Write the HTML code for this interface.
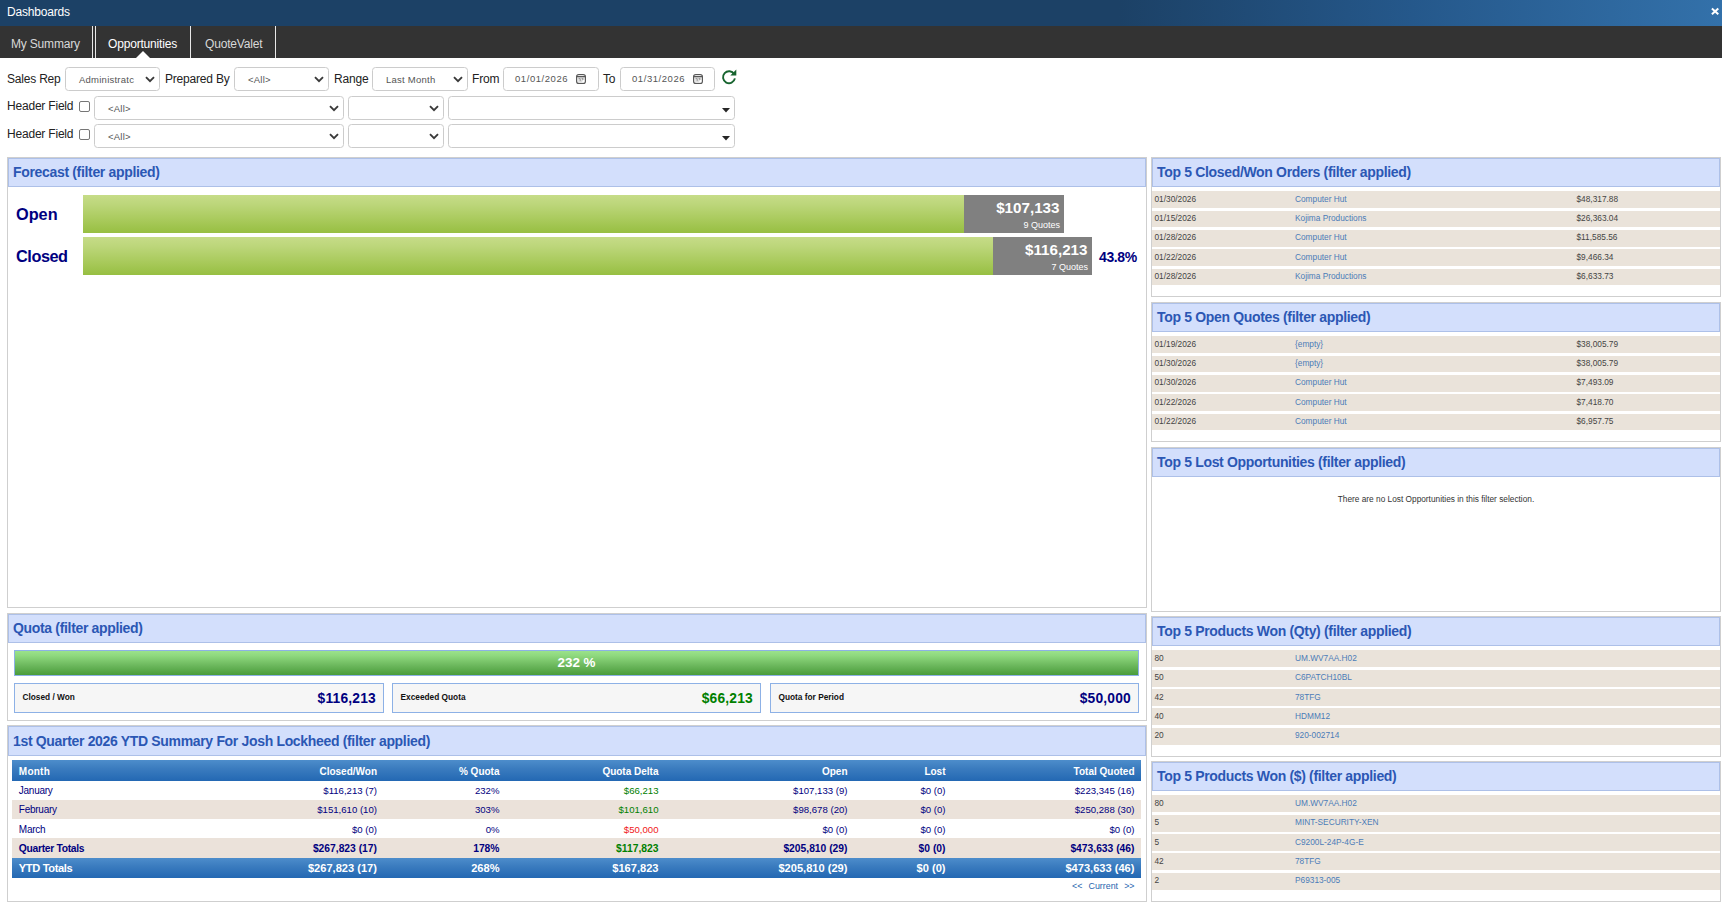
<!DOCTYPE html>
<html>
<head>
<meta charset="utf-8">
<title>Dashboards</title>
<style>
*{box-sizing:border-box;margin:0;padding:0}
html,body{width:1722px;height:909px;overflow:hidden;background:#fff}
body{position:relative;font-family:"Liberation Sans",Arial,sans-serif;font-size:12px;color:#222}
.abs{position:absolute}
/* title bar */
#title{position:absolute;left:0;top:0;width:1722px;height:26px;background:linear-gradient(90deg,#1c4166 0,#1c4166 65%,#25588b 82%,#3371aa 100%);color:#fff}
#title .t{position:absolute;left:7px;top:5px;font-size:12px;line-height:14px;letter-spacing:-0.2px}
#title .x{position:absolute;left:1710px;top:7px;width:10px;height:9px}
/* tab bar */
#tabs{position:absolute;left:0;top:26px;width:1722px;height:32px;background:#333}
#tabs .tab{position:absolute;top:0;height:32px;line-height:37px;letter-spacing:-0.18px;font-size:12px;color:#d8d8d8;white-space:nowrap}
#tabs .sep{position:absolute;top:0;width:1px;height:32px;background:#e8e8e8}
#tabs .tri{position:absolute;left:136px;top:25px;width:0;height:0;border-left:7px solid transparent;border-right:7px solid transparent;border-bottom:7px solid #fff}
/* filters */
.lbl{position:absolute;letter-spacing:-0.2px;font-size:12px;line-height:14px;color:#222;white-space:nowrap}
.sel{position:absolute;height:24px;border:1px solid #ccc;border-radius:3.5px;background:#fff;font-size:9.5px;letter-spacing:0.24px;color:#555;line-height:22px;white-space:nowrap;overflow:hidden}
.sel span{position:absolute;left:13px;top:1.3px}
.sel svg{position:absolute;right:4px;top:8px}
.sel.date span{left:11px;top:0.4px;font-size:9.5px;letter-spacing:0.56px}
.sel svg.cal{right:11.3px;top:6px}
.sel svg.dd{right:4px;top:11px}
.cb{position:absolute;width:11px;height:11px;border:1px solid #767676;border-radius:2px;background:#fff}
/* panels */
.panel{position:absolute;border:1px solid #cfcfcf;background:#fff}
.ph{position:absolute;left:0;top:0;right:0;height:29px;background:#d3dffc;border:1px solid #adc0e8;color:#2b57b4;font-weight:bold;font-size:14px;letter-spacing:-0.33px;line-height:27px;padding-left:4px;white-space:nowrap}
.row{position:absolute;left:0;right:0;background:#eae3da;font-size:8.3px;color:#444;white-space:nowrap}
.row span{position:absolute;top:0}
.row .c1{left:2.5px}
.row .c2{left:143px;color:#4b7cb8}
.row .c3{left:424.5px}

/* forecast */
.fl{position:absolute;left:8px;font-weight:bold;font-size:16.3px;color:#000080;line-height:20px;white-space:nowrap}
.gbar{position:absolute;height:38px;background:linear-gradient(180deg,#c6dc88 0%,#bcd67a 25%,#a9ca5c 65%,#97bf42 100%)}
.gray{position:absolute;height:38px;background:#808080;color:#fff;text-align:right;white-space:nowrap}
.gray b{position:absolute;right:4.5px;top:2.7px;font-size:15.2px;line-height:20px}
.gray i{position:absolute;right:4px;top:24px;font-style:normal;font-size:9px;line-height:12px}
.pct{position:absolute;letter-spacing:-0.4px;font-weight:bold;font-size:14px;color:#000080;line-height:16px}
/* quota */
.qbar{position:absolute;left:6px;top:36px;width:1125px;height:26px;border:1px solid #8db1e6;background:linear-gradient(180deg,#9be28b 0%,#8ed87e 20%,#6cb85d 60%,#4a9c3b 100%);color:#fff;font-weight:bold;font-size:13.4px;text-align:center;line-height:24px}
.qbox{position:absolute;top:69px;height:30px;border:1px solid #8db1e6;background:#f6f6f6}
.qbox .k{position:absolute;left:7.5px;top:8px;font-size:8.3px;font-weight:bold;color:#111;line-height:10px;white-space:nowrap}
.qbox .v{position:absolute;right:7px;top:7px;letter-spacing:0.2px;font-size:13.8px;font-weight:bold;color:#000080;line-height:16px;white-space:nowrap}
/* summary table */
.trow{position:absolute;left:4px;width:1129px;font-size:9.6px;color:#000080;white-space:nowrap}
.trow span{position:absolute;top:0;text-align:right}
.trow .m{left:6.8px;text-align:left;font-size:10px;letter-spacing:-0.25px}
.trow.hd .m{letter-spacing:0.25px}
.trow.b .m{font-size:10.3px;letter-spacing:-0.3px}
.trow.ytd .m{font-size:11.1px;letter-spacing:-0.35px}
.trow.hd{background:linear-gradient(180deg,#4d8dcb 0%,#3b7cbf 40%,#2368b3 100%);color:#fff;font-weight:bold;font-size:10px}
.trow.alt{background:#ebe2da}
.trow.b{font-weight:bold;font-size:10.3px}
.trow.ytd{font-size:11.1px;color:#fff;font-weight:bold;background:linear-gradient(180deg,#4d8dcb 0%,#3b7cbf 40%,#2368b3 100%)}
.g,.qbox .v.g{color:#008000}.r{color:#f01818}
</style>
</head>
<body>

<div id="title"><div class="t">Dashboards</div>
<svg class="x" viewBox="0 0 10 9"><path d="M1.9 1.5 L8.3 7.3 M8.3 1.5 L1.9 7.3" stroke="#fff" stroke-width="2" stroke-linecap="butt" fill="none"/></svg>
</div>

<div id="tabs">
  <div class="tab" style="left:11px">My Summary</div>
  <div class="sep" style="left:92px"></div>
  <div class="sep" style="left:95px"></div>
  <div class="tab" style="left:108px;color:#fff">Opportunities</div>
  <div class="sep" style="left:190px"></div>
  <div class="tab" style="left:205px">QuoteValet</div>
  <div class="sep" style="left:275px"></div>
  <div class="tri"></div>
</div>

<!-- FILTERS -->
<div id="filters">
<div class="lbl" style="left:7px;top:72px">Sales Rep</div>
<div class="sel" style="left:65px;top:67px;width:95px"><span>Administratc</span><svg width="10" height="7" viewBox="0 0 10 7"><path d="M1 1.2 L5 5.2 L9 1.2" stroke="#3a3a3a" stroke-width="1.9" fill="none"/></svg></div>
<div class="lbl" style="left:165px;top:72px">Prepared By</div>
<div class="sel" style="left:234px;top:67px;width:95px"><span>&lt;All&gt;</span><svg width="10" height="7" viewBox="0 0 10 7"><path d="M1 1.2 L5 5.2 L9 1.2" stroke="#3a3a3a" stroke-width="1.9" fill="none"/></svg></div>
<div class="lbl" style="left:334px;top:72px">Range</div>
<div class="sel" style="left:372px;top:67px;width:96px"><span>Last Month</span><svg width="10" height="7" viewBox="0 0 10 7"><path d="M1 1.2 L5 5.2 L9 1.2" stroke="#3a3a3a" stroke-width="1.9" fill="none"/></svg></div>
<div class="lbl" style="left:472px;top:72px">From</div>
<div class="sel date" style="left:503px;top:67px;width:96px"><span>01/01/2026</span><svg class="cal" style="right:12px" width="10" height="10" viewBox="0 0 10 10"><rect x="0.55" y="0.55" width="8.9" height="8.9" rx="2.3" fill="#e4e4e4" stroke="#585858" stroke-width="1.1"/><path d="M0.6 2.6 H9.4" stroke="#585858" stroke-width="1.2"/><path d="M2.6 4.6 h1.6 v2.6 M5.6 4.6 h1.5 l-0.9 2.6" stroke="#777" stroke-width="0.7" fill="none"/><rect x="6.3" y="6" width="2" height="2.3" fill="#fff"/></svg></div>
<div class="lbl" style="left:603px;top:72px">To</div>
<div class="sel date" style="left:620px;top:67px;width:95px"><span>01/31/2026</span><svg class="cal" width="10" height="10" viewBox="0 0 10 10"><rect x="0.55" y="0.55" width="8.9" height="8.9" rx="2.3" fill="#e4e4e4" stroke="#585858" stroke-width="1.1"/><path d="M0.6 2.6 H9.4" stroke="#585858" stroke-width="1.2"/><path d="M2.6 4.6 h1.6 v2.6 M5.6 4.6 h1.5 l-0.9 2.6" stroke="#777" stroke-width="0.7" fill="none"/><rect x="6.3" y="6" width="2" height="2.3" fill="#fff"/></svg></div>
<svg class="abs" style="left:720.3px;top:67.5px" width="18" height="18" viewBox="0 0 18 18"><path d="M14.2 6.2 A6 6 0 1 0 14.9 10.4" stroke="#17642f" stroke-width="1.9" fill="none"/><path d="M16.3 1.6 V7.6 H10.3 Z" fill="#17642f"/></svg>
<div class="lbl" style="left:7px;top:99px">Header Field</div>
<div class="cb" style="left:79px;top:101px"></div>
<div class="sel" style="left:94px;top:96px;width:250px"><span>&lt;All&gt;</span><svg width="10" height="7" viewBox="0 0 10 7"><path d="M1 1.2 L5 5.2 L9 1.2" stroke="#3a3a3a" stroke-width="1.9" fill="none"/></svg></div>
<div class="sel" style="left:348px;top:96px;width:96px"><span></span><svg width="10" height="7" viewBox="0 0 10 7"><path d="M1 1.2 L5 5.2 L9 1.2" stroke="#3a3a3a" stroke-width="1.9" fill="none"/></svg></div>
<div class="sel" style="left:448px;top:96px;width:287px"><svg class="dd" width="8" height="5" viewBox="0 0 8 5"><path d="M0 0 H8 L4 4.6 Z" fill="#262626"/></svg></div>
<div class="lbl" style="left:7px;top:127px">Header Field</div>
<div class="cb" style="left:79px;top:129px"></div>
<div class="sel" style="left:94px;top:124px;width:250px"><span>&lt;All&gt;</span><svg width="10" height="7" viewBox="0 0 10 7"><path d="M1 1.2 L5 5.2 L9 1.2" stroke="#3a3a3a" stroke-width="1.9" fill="none"/></svg></div>
<div class="sel" style="left:348px;top:124px;width:96px"><span></span><svg width="10" height="7" viewBox="0 0 10 7"><path d="M1 1.2 L5 5.2 L9 1.2" stroke="#3a3a3a" stroke-width="1.9" fill="none"/></svg></div>
<div class="sel" style="left:448px;top:124px;width:287px"><svg class="dd" width="8" height="5" viewBox="0 0 8 5"><path d="M0 0 H8 L4 4.6 Z" fill="#262626"/></svg></div>
</div>

<!-- LEFT PANELS -->
<div id="left">
<div class="panel" style="left:7px;top:157px;width:1140px;height:451px"><div class="ph">Forecast (filter applied)</div>
<div class="fl" style="top:46px">Open</div>
<div class="gbar" style="left:75px;top:37px;width:881px"></div>
<div class="gray" style="left:956px;top:37px;width:100px"><b>$107,133</b><i>9 Quotes</i></div>
<div class="fl" style="top:88px;letter-spacing:-0.45px">Closed</div>
<div class="gbar" style="left:75px;top:79px;width:910px"></div>
<div class="gray" style="left:985px;top:79px;width:99px"><b>$116,213</b><i>7 Quotes</i></div>
<div class="pct" style="left:1091px;top:91px">43.8%</div>
</div>
<div class="panel" style="left:7px;top:613px;width:1140px;height:108px"><div class="ph">Quota (filter applied)</div>
<div class="qbar">232 %</div>
<div class="qbox" style="left:6px;width:370px"><div class="k">Closed / Won</div><div class="v">$116,213</div></div>
<div class="qbox" style="left:384px;width:369px"><div class="k">Exceeded Quota</div><div class="v g">$66,213</div></div>
<div class="qbox" style="left:762px;width:369px"><div class="k">Quota for Period</div><div class="v">$50,000</div></div>
</div>
<div class="panel" style="left:7px;top:725px;width:1140px;height:177px"><div class="ph" style="height:30px;line-height:29px">1st Quarter 2026 YTD Summary For Josh Lockheed (filter applied)</div>
<div class="trow hd" style="top:34px;height:21px;line-height:23px"><span class="m">Month</span><span style="right:764.0px">Closed/Won</span><span style="right:641.5px">% Quota</span><span style="right:482.5px">Quota Delta</span><span style="right:293.5px">Open</span><span style="right:195.5px">Lost</span><span style="right:6.5px">Total Quoted</span></div>
<div class="trow " style="top:55px;height:19px;line-height:19px"><span class="m">January</span><span style="right:764.0px">$116,213 (7)</span><span style="right:641.5px">232%</span><span class="g" style="right:482.5px">$66,213</span><span style="right:293.5px">$107,133 (9)</span><span style="right:195.5px">$0 (0)</span><span style="right:6.5px">$223,345 (16)</span></div>
<div class="trow alt" style="top:74px;height:19px;line-height:19px"><span class="m">February</span><span style="right:764.0px">$151,610 (10)</span><span style="right:641.5px">303%</span><span class="g" style="right:482.5px">$101,610</span><span style="right:293.5px">$98,678 (20)</span><span style="right:195.5px">$0 (0)</span><span style="right:6.5px">$250,288 (30)</span></div>
<div class="trow " style="top:93px;height:19px;line-height:21.5px"><span class="m">March</span><span style="right:764.0px">$0 (0)</span><span style="right:641.5px">0%</span><span class="r" style="right:482.5px">$50,000</span><span style="right:293.5px">$0 (0)</span><span style="right:195.5px">$0 (0)</span><span style="right:6.5px">$0 (0)</span></div>
<div class="trow alt b" style="top:112px;height:20px;line-height:22.5px"><span class="m">Quarter Totals</span><span style="right:764.0px">$267,823 (17)</span><span style="right:641.5px">178%</span><span class="g" style="right:482.5px">$117,823</span><span style="right:293.5px">$205,810 (29)</span><span style="right:195.5px">$0 (0)</span><span style="right:6.5px">$473,633 (46)</span></div>
<div class="trow ytd" style="top:132px;height:20px;line-height:20px"><span class="m">YTD Totals</span><span style="right:764.0px">$267,823 (17)</span><span style="right:641.5px">268%</span><span style="right:482.5px">$167,823</span><span style="right:293.5px">$205,810 (29)</span><span style="right:195.5px">$0 (0)</span><span style="right:6.5px">$473,633 (46)</span></div>
<div style="position:absolute;right:11.5px;top:155px;font-size:8.9px;word-spacing:-0.45px;line-height:10px;color:#2865ae;white-space:pre">&lt;&lt;   Current   &gt;&gt;</div>
</div>
</div>

<!-- RIGHT PANELS -->
<div id="right">
<div class="panel" style="left:1151px;top:157px;width:570px;height:140px"><div class="ph">Top 5 Closed/Won Orders (filter applied)</div>
<div class="row" style="top:33px;height:17px;line-height:17px"><span class="c1">01/30/2026</span><span class="c2">Computer Hut</span><span class="c3">$48,317.88</span></div>
<div class="row" style="top:53px;height:16px;line-height:15px"><span class="c1">01/15/2026</span><span class="c2">Kojima Productions</span><span class="c3">$26,363.04</span></div>
<div class="row" style="top:72px;height:17px;line-height:15px"><span class="c1">01/28/2026</span><span class="c2">Computer Hut</span><span class="c3">$11,585.56</span></div>
<div class="row" style="top:91px;height:17px;line-height:17px"><span class="c1">01/22/2026</span><span class="c2">Computer Hut</span><span class="c3">$9,466.34</span></div>
<div class="row" style="top:111px;height:16px;line-height:15px"><span class="c1">01/28/2026</span><span class="c2">Kojima Productions</span><span class="c3">$6,633.73</span></div>
</div>
<div class="panel" style="left:1151px;top:302px;width:570px;height:140px"><div class="ph">Top 5 Open Quotes (filter applied)</div>
<div class="row" style="top:33px;height:17px;line-height:17px"><span class="c1">01/19/2026</span><span class="c2">{empty}</span><span class="c3">$38,005.79</span></div>
<div class="row" style="top:53px;height:16px;line-height:15px"><span class="c1">01/30/2026</span><span class="c2">{empty}</span><span class="c3">$38,005.79</span></div>
<div class="row" style="top:72px;height:17px;line-height:15px"><span class="c1">01/30/2026</span><span class="c2">Computer Hut</span><span class="c3">$7,493.09</span></div>
<div class="row" style="top:91px;height:17px;line-height:17px"><span class="c1">01/22/2026</span><span class="c2">Computer Hut</span><span class="c3">$7,418.70</span></div>
<div class="row" style="top:111px;height:16px;line-height:15px"><span class="c1">01/22/2026</span><span class="c2">Computer Hut</span><span class="c3">$6,957.75</span></div>
</div>
<div class="panel" style="left:1151px;top:447px;width:570px;height:165px"><div class="ph">Top 5 Lost Opportunities (filter applied)</div>
<div style="position:absolute;left:0;right:0;top:46px;text-align:center;font-size:8.3px;line-height:10px;color:#333">There are no Lost Opportunities in this filter selection.</div>
</div>
<div class="panel" style="left:1151px;top:616px;width:570px;height:141px"><div class="ph">Top 5 Products Won (Qty) (filter applied)</div>
<div class="row" style="top:33px;height:17px;line-height:17px"><span class="c1">80</span><span class="c2">UM.WV7AA.H02</span></div>
<div class="row" style="top:53px;height:17px;line-height:15px"><span class="c1">50</span><span class="c2">C6PATCH10BL</span></div>
<div class="row" style="top:72px;height:17px;line-height:17px"><span class="c1">42</span><span class="c2">78TFG</span></div>
<div class="row" style="top:91px;height:17px;line-height:17px"><span class="c1">40</span><span class="c2">HDMM12</span></div>
<div class="row" style="top:111px;height:17px;line-height:15px"><span class="c1">20</span><span class="c2">920-002714</span></div>
</div>
<div class="panel" style="left:1151px;top:761px;width:570px;height:141px"><div class="ph">Top 5 Products Won ($) (filter applied)</div>
<div class="row" style="top:33px;height:17px;line-height:17px"><span class="c1">80</span><span class="c2">UM.WV7AA.H02</span></div>
<div class="row" style="top:53px;height:17px;line-height:15px"><span class="c1">5</span><span class="c2">MINT-SECURITY-XEN</span></div>
<div class="row" style="top:72px;height:17px;line-height:17px"><span class="c1">5</span><span class="c2">C9200L-24P-4G-E</span></div>
<div class="row" style="top:91px;height:17px;line-height:17px"><span class="c1">42</span><span class="c2">78TFG</span></div>
<div class="row" style="top:111px;height:17px;line-height:15px"><span class="c1">2</span><span class="c2">P69313-005</span></div>
</div>
</div>

</body>
</html>
